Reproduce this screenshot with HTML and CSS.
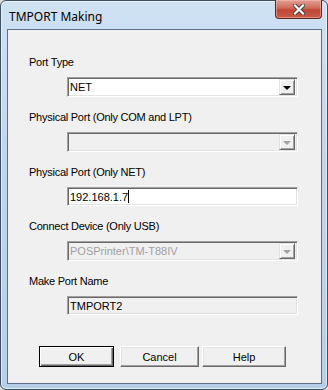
FILE: index.html
```html
<!DOCTYPE html>
<html lang="en">
<head>
  <meta charset="UTF-8">
  <title>TMPORT Making</title>
  <link rel="stylesheet" href="styles.css">
</head>
<body>
  <div class="window">
    <div class="titlebar">
      <span class="title">TMPORT Making</span>
      <div class="close">
        <svg width="12" height="11" viewBox="0 0 12 11">
          <path d="M2 1.5 L10 9.5 M10 1.5 L2 9.5" stroke="#3b3b3b" stroke-width="4" stroke-linecap="square"/>
          <path d="M2 1.5 L10 9.5 M10 1.5 L2 9.5" stroke="#fff" stroke-width="2.2" stroke-linecap="square"/>
        </svg>
      </div>
    </div>

    <div class="client">
      <div class="field">
        <label>Port Type</label>
        <div class="combo">
          <span class="value">NET</span>
          <span class="drop"><span class="arrow"></span></span>
        </div>
      </div>

      <div class="field">
        <label>Physical Port (Only COM and LPT)</label>
        <div class="combo disabled">
          <span class="value"></span>
          <span class="drop"><span class="arrow"></span></span>
        </div>
      </div>

      <div class="field">
        <label>Physical Port (Only NET)</label>
        <div class="edit">
          <span class="value">192.168.1.7</span><span class="caret"></span>
        </div>
      </div>

      <div class="field">
        <label>Connect Device (Only USB)</label>
        <div class="combo disabled">
          <span class="value">POSPrinter\TM-T88IV</span>
          <span class="drop"><span class="arrow"></span></span>
        </div>
      </div>

      <div class="field">
        <label>Make Port Name</label>
        <div class="edit readonly">
          <span class="value">TMPORT2</span>
        </div>
      </div>

      <div class="buttons">
        <div class="btn default">OK</div>
        <div class="btn cancel">Cancel</div>
        <div class="btn help">Help</div>
      </div>
    </div>
  </div>
</body>
</html>
```

FILE: styles.css
```css
body {
  margin: 0;
  background: #dcdcdc;
  font-family: 'Liberation Sans', Arial, sans-serif;
}

.window {
  width: 328px;
  height: 390px;
  box-sizing: border-box;
  border: 1px solid #3e4f63;
  border-radius: 6px;
  background: linear-gradient(to bottom, #cfe2f4 0%, #bed6ee 40%, #b7d0ea 100%);
  box-shadow: inset 0 0 0 1px rgba(255, 255, 255, 0.55);
  display: flex;
  flex-direction: column;
  padding: 0 5px 5px 6px;
}

.titlebar {
  height: 28px;
  display: flex;
  justify-content: space-between;
  align-items: flex-start;
}

.title {
  font-family: 'Noto Sans', 'Open Sans', sans-serif;
  font-size: 12px;
  color: #000;
  margin: 7px 0 0 2px;
}

.close {
  width: 47px;
  height: 19px;
  margin-top: -1px;
  box-sizing: border-box;
  border: 1px solid #5c2a22;
  border-top: none;
  border-radius: 0 0 4px 4px;
  background: linear-gradient(to bottom, #e0a093 0%, #cf6a58 45%, #bf4733 55%, #c85b45 100%);
  box-shadow: inset 0 0 0 1px rgba(255, 200, 190, 0.45);
  display: flex;
  align-items: center;
  justify-content: center;
}

.client {
  flex: 1;
  background: #f0f0f0;
  border: 1px solid #5f7085;
  padding: 26px 0 0 21px;
  color: #000;
  font-size: 11px;
}

.field {
  margin-bottom: 14px;
}

.field label {
  display: block;
  height: 13px;
  line-height: 13px;
  margin-bottom: 8px;
  color: #000;
  letter-spacing: -0.25px;
}

.combo, .edit {
  margin-left: 38px;
  width: 231px;
  box-sizing: border-box;
  background: #fff;
  border-top: 1px solid #a0a0a0;
  border-left: 1px solid #a0a0a0;
  border-right: 1px solid #fff;
  border-bottom: 1px solid #fff;
  box-shadow: inset 1px 1px 0 #696969, inset -1px -1px 0 #e3e3e3;
  display: flex;
  align-items: center;
  padding: 2px 2px 2px 2px;
}

.combo {
  height: 20px;
}

.edit {
  height: 19px;
}

.value {
  flex: 1;
  font-size: 11px;
  color: #000;
  white-space: nowrap;
  overflow: hidden;
}

.caret {
  width: 1px;
  height: 13px;
  background: #000;
  margin-right: auto;
}

.edit .value {
  flex: none;
}

.combo.disabled, .edit.readonly {
  background: #f0f0f0;
}

.combo.disabled .value {
  color: #a0a0a0;
}

.drop {
  width: 16px;
  height: 16px;
  box-sizing: border-box;
  background: #f0f0f0;
  border-top: 1px solid #e3e3e3;
  border-left: 1px solid #e3e3e3;
  border-right: 1px solid #696969;
  border-bottom: 1px solid #696969;
  box-shadow: inset 1px 1px 0 #fff, inset -1px -1px 0 #a0a0a0;
  display: flex;
  align-items: center;
  justify-content: center;
}

.arrow {
  width: 0;
  height: 0;
  border-left: 4px solid transparent;
  border-right: 4px solid transparent;
  border-top: 4px solid #000;
  margin-top: 1px;
}

.disabled .arrow {
  border-top-color: #a0a0a0;
}

.buttons {
  display: flex;
  margin-top: 31px;
  margin-left: 10px;
}

.btn {
  height: 21px;
  box-sizing: border-box;
  background: #f0f0f0;
  border-top: 1px solid #fff;
  border-left: 1px solid #fff;
  border-right: 1px solid #696969;
  border-bottom: 1px solid #696969;
  box-shadow: inset -1px -1px 0 #a0a0a0, inset 1px 1px 0 #e3e3e3;
  display: flex;
  align-items: center;
  justify-content: center;
  font-size: 11px;
  color: #000;
}

.btn.default {
  width: 75px;
  border: 1px solid #000;
  box-shadow: inset 1px 1px 0 #fff, inset -1px -1px 0 #696969, inset -2px -2px 0 #a0a0a0;
  margin-right: 6px;
}

.btn.cancel {
  width: 79px;
  margin-right: 3px;
}

.btn.help {
  width: 84px;
}
```
